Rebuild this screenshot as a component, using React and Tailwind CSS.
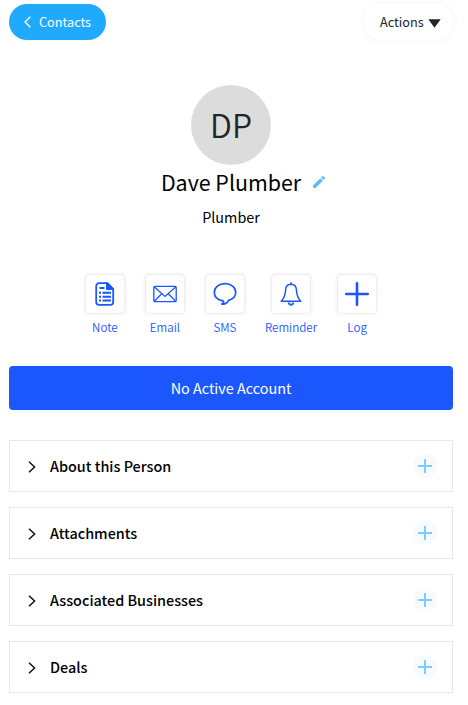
import React, { useState } from 'react';

const sections = ['About this Person', 'Attachments', 'Associated Businesses', 'Deals'];

function NoteIcon() {
  return (
    <svg width="20" height="24" viewBox="0 0 20 24" fill="none" stroke="#1b57fd" strokeWidth="1.8">
      <path d="M4 1.2h8.5L18.2 7v13a2.8 2.8 0 0 1-2.8 2.8H4A2.8 2.8 0 0 1 1.2 20V4A2.8 2.8 0 0 1 4 1.2z" />
      <path d="M11.5 1.2V7.500h6.700V6.500L13 1.200z" fill="#1b57fd" strokeWidth="1" />
      <path d="M4.5 6H9.500M4 10.800h2M7.500 10.800H16M4 14.800h2M7.500 14.800H16M4 18.500h2M7.500 18.500H16" strokeWidth="1.9" />
    </svg>
  );
}

function EmailIcon() {
  return (
    <svg width="24" height="18" viewBox="0 0 24 18" fill="none" stroke="#1b57fd" strokeWidth="1.3">
      <rect x="0.8" y="1.3" width="22.4" height="15.4" rx="1.2" />
      <path d="M1.2 1.8 12 11.5 22.8 1.8M1.2 16.3l7.6-7.5M22.8 16.3l-7.6-7.5" />
    </svg>
  );
}

function SmsIcon() {
  return (
    <svg width="24" height="24" viewBox="0 0 24 24" fill="none" stroke="#1b57fd" strokeWidth="1.7" strokeLinejoin="round">
      <path d="M12 1.6C6 1.6 1.300 5.300 1.300 10.300c0 4.200 3 7.400 7.700 8.400 1.300.3 1.900.8 1.600 1.600-.3.800-.9 1.300-1.800 1.800 3.500.2 5.700-1.300 6.700-3.700 4.300-1.100 7.200-4.300 7.200-8.100C22.700 5.300 18 1.600 12 1.600z" />
    </svg>
  );
}

function BellIcon() {
  return (
    <svg width="24" height="24" viewBox="0 0 24 24" fill="none" stroke="#1b57fd" strokeWidth="1.5" strokeLinejoin="round">
      <path d="M12 2.200c-3.300 0-5.200 2.300-5.400 5.600C6.400 13 5.200 16.200 2.200 19.300h19.600c-3-3.100-4.200-6.300-4.400-11.500C17.200 4.500 15.300 2.200 12 2.200z" />
      <path d="M12 .4v2" strokeWidth="2" />
      <path d="M9.500 20.500c.2 1.600 1.200 2.500 2.500 2.500s2.300-.9 2.500-2.500" fill="#1b57fd" fillOpacity=".4" />
    </svg>
  );
}

function LogIcon() {
  return (
    <svg width="24" height="24" viewBox="0 0 24 24" stroke="#1b57fd" strokeWidth="2.600" strokeLinecap="round">
      <path d="M12 1.300v21.400M1.300 12h21.400" />
    </svg>
  );
}

const actions = [
  { label: 'Note', icon: <NoteIcon /> },
  { label: 'Email', icon: <EmailIcon /> },
  { label: 'SMS', icon: <SmsIcon /> },
  { label: 'Reminder', icon: <BellIcon /> },
  { label: 'Log', icon: <LogIcon /> },
];

function Section({ title, open, onToggle }) {
  return (
    <div className="border border-[#e8e8e8]">
      <div className="flex h-[50px] items-center pr-[15px] pl-[18px]">
        <button onClick={onToggle} className="flex flex-1 items-center gap-[14px] text-left">
          <svg width="8" height="12" viewBox="0 0 8 12" fill="none" stroke="#111" strokeWidth="1.500" className={open ? 'rotate-90' : 'mt-0.5'}>
            <path d="M1 .7 6.600 6 1 11.300" />
          </svg>
          <span className="text-[14.4px] leading-5 font-medium text-black">{title}</span>
        </button>
        <button className="flex h-6 w-6 items-center justify-center rounded-full bg-[#f7faff]">
          <svg width="14" height="14" viewBox="0 0 14 14" stroke="#7dcdfd" strokeWidth="2">
            <path d="M7 0v14M0 7h14" />
          </svg>
        </button>
      </div>
    </div>
  );
}

function App() {
  const [openSection, setOpenSection] = useState(null);

  return (
    <div className="h-[705px] w-[468px] overflow-hidden bg-white pt-1 pr-[15px] pl-[9px] font-['Noto_Sans_CJK_JP','Noto_Sans',sans-serif]">
      <div className="flex justify-between">
        <button className="flex h-9 w-[97px] items-center gap-2 rounded-full bg-[#1faafe] pl-[15px] text-[12.7px] text-white">
          <svg width="7" height="12" viewBox="0 0 7 12" fill="none" stroke="white" strokeWidth="1.400">
            <path d="M6.300.8 1 6l5.300 5.200" />
          </svg>
          Contacts
        </button>
        <button className="flex h-9 w-[89px] items-center gap-1 rounded-full bg-white pl-4 text-[12.7px] text-[#212529] shadow-[0_0_10px_rgba(0,0,0,0.05)]">
          Actions
          <svg width="13" height="9" viewBox="0 0 13 9" fill="#212529" className="mt-0.5">
            <path d="M.3.300h12.400L6.500 8.800z" />
          </svg>
        </button>
      </div>

      <div className="mt-[45px] flex flex-col items-center">
        <div className="flex h-20 w-20 items-center justify-center rounded-full bg-[#dcdcdc] pb-0.5 text-[32px] leading-none font-[350] text-[#212529]">
          DP
        </div>
        <div className="flex h-[34px] items-center gap-3 pl-6">
          <h1 className="text-[21.4px] leading-[34px] text-black">Dave Plumber</h1>
          <svg width="12" height="12" viewBox="3 3 18 18" fill="#5bbcfa">
            <path d="M3 17.250V21h3.750L17.810 9.940l-3.750-3.750zM20.710 7.040a1 1 0 0 0 0-1.410l-2.340-2.340a1 1 0 0 0-1.410 0l-1.830 1.830 3.750 3.750z" />
          </svg>
        </div>
        <p className="mt-1.5 mb-px text-[14.4px] leading-6 text-black">Plumber</p>
      </div>

      <div className="mt-11 flex justify-center gap-5">
        {actions.map((action) => (
          <button key={action.label} className="flex min-w-10 flex-col items-center">
            <span className="flex h-10 w-10 items-center justify-center rounded border border-[#ededed] bg-white shadow-[0_0_4px_rgba(0,0,0,0.07)]">
              {action.icon}
            </span>
            <span className="mt-1 text-[11.6px] leading-[18px] font-[350] text-[#1b57fd]">{action.label}</span>
          </button>
        ))}
      </div>

      <button className="mt-[30px] flex h-11 w-full items-center justify-center rounded bg-[#1b57fd] text-[14.4px] text-white">
        No Active Account
      </button>

      <div className="mt-[30px] space-y-[15px]">
        {sections.map((title) => (
          <Section
            key={title}
            title={title}
            open={openSection === title}
            onToggle={() => setOpenSection(openSection === title ? null : title)}
          />
        ))}
      </div>
    </div>
  );
}

export default App;
